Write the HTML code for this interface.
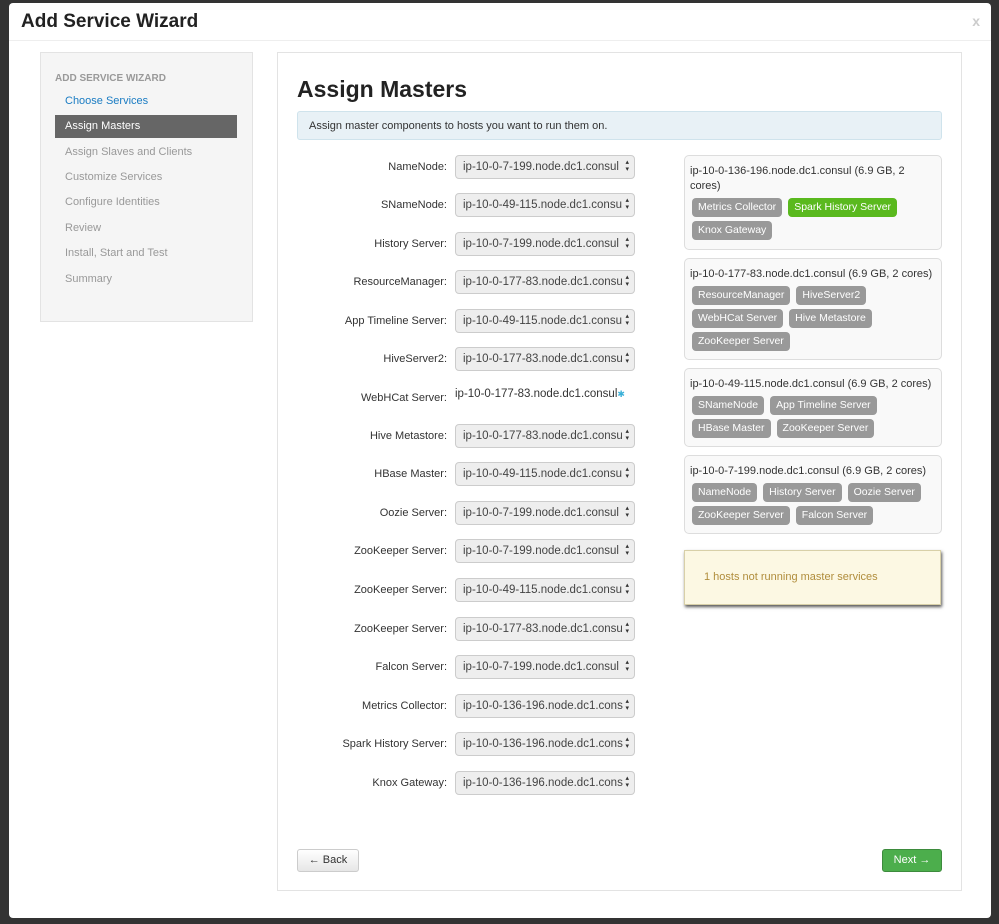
<!DOCTYPE html>
<html><head><style>
*{box-sizing:border-box;margin:0;padding:0}
body{width:999px;height:924px;background:#333;font-family:"Liberation Sans",sans-serif;font-size:12px;color:#333;position:relative;overflow:hidden}
.modal{position:absolute;left:9px;top:3px;width:982px;height:915px;background:#fff;border-radius:4px}
.hdr{position:absolute;left:0;top:0;width:100%;height:38px;border-bottom:1px solid #eee}
.hdr h3{position:absolute;left:12px;top:8px;font-size:19px;font-weight:bold;color:#222}
.close{position:absolute;right:11px;top:10px;font-size:14px;font-weight:bold;color:#ccc}
.side{position:absolute;left:31px;top:49px;width:213px;height:270px;background:#f5f5f5;border:1px solid #e3e3e3}
.side .t{position:absolute;left:14px;top:20px;font-size:10px;font-weight:bold;color:#999}
.side .i{position:absolute;left:14px;width:182px;height:23px;padding-left:10px;line-height:23px;font-size:11px;color:#999}
.main{position:absolute;left:268px;top:49px;width:685px;height:839px;border:1px solid #e3e3e3}
h2{position:absolute;left:19px;top:23px;font-size:23px;font-weight:bold;color:#222}
.info{position:absolute;left:19px;top:58px;width:645px;height:29px;background:#e8f1f6;border:1px solid #cfe3ec;border-radius:3px;padding:8px 11px;font-size:11px;color:#333}
.lbl{position:absolute;width:169px;text-align:right;font-size:11px;left:0}
.sel{position:absolute;left:177px;width:180px;height:24px;background:#eee;border:1px solid #ccc;border-radius:4px;font-size:11.5px;padding:5px 7px;color:#444;white-space:nowrap;overflow:hidden}
.sel:after{content:"▴\A▾";white-space:pre;position:absolute;right:5px;top:3px;font-size:7px;line-height:7px;color:#333}
.host{position:absolute;left:406px;width:258px;background:#f9f9f9;border:1px solid #ddd;border-radius:5px;padding:8px 4px 0 5px;font-size:11px;line-height:15px}
.b{display:inline-block;background:#999;color:#fff;border-radius:4px;padding:2px 6px;font-size:10.5px;margin:4px 4px 0 2px;line-height:15px}
.g{background:#5ab91e}
.warn{position:absolute;left:406px;top:497px;width:257px;height:55px;background:#fcf8e3;border:1px solid #d8d0a8;box-shadow:1px 2px 3px #555;padding:20px 19px;color:#b08d3c;font-size:11px}
.btn{position:absolute;top:796px;height:23px;border-radius:3px;font-size:11px;line-height:21px;text-align:center}
</style></head><body>
<div class="modal">
<div class="hdr"><h3>Add Service Wizard</h3><span class="close">x</span></div>
<div class="side">
<div class="t">ADD SERVICE WIZARD</div>
<div class="i" style="top:37px;color:#1a7cc3">Choose Services</div>
<div class="i" style="top:62px;background:#666;color:#fff">Assign Masters</div>
<div class="i" style="top:88px">Assign Slaves and Clients</div>
<div class="i" style="top:113px">Customize Services</div>
<div class="i" style="top:138px">Configure Identities</div>
<div class="i" style="top:164px">Review</div>
<div class="i" style="top:189px">Install, Start and Test</div>
<div class="i" style="top:215px">Summary</div>
</div>
<div class="main">
<h2>Assign Masters</h2>
<div class="info">Assign master components to hosts you want to run them on.</div>

<div class="lbl" style="top:108px">NameNode:</div><div class="sel" style="top:102px">ip-10-0-7-199.node.dc1.consul</div>
<div class="lbl" style="top:146px">SNameNode:</div><div class="sel" style="top:140px">ip-10-0-49-115.node.dc1.consu</div>
<div class="lbl" style="top:185px">History Server:</div><div class="sel" style="top:179px">ip-10-0-7-199.node.dc1.consul</div>
<div class="lbl" style="top:223px">ResourceManager:</div><div class="sel" style="top:217px">ip-10-0-177-83.node.dc1.consu</div>
<div class="lbl" style="top:262px">App Timeline Server:</div><div class="sel" style="top:256px">ip-10-0-49-115.node.dc1.consu</div>
<div class="lbl" style="top:300px">HiveServer2:</div><div class="sel" style="top:294px">ip-10-0-177-83.node.dc1.consu</div>
<div class="lbl" style="top:339px">WebHCat Server:</div><div style="position:absolute;left:177px;top:335px;font-size:11.5px">ip-10-0-177-83.node.dc1.consul<span style="color:#3ab0d8;font-size:9px">✱</span></div>
<div class="lbl" style="top:377px">Hive Metastore:</div><div class="sel" style="top:371px">ip-10-0-177-83.node.dc1.consu</div>
<div class="lbl" style="top:415px">HBase Master:</div><div class="sel" style="top:409px">ip-10-0-49-115.node.dc1.consu</div>
<div class="lbl" style="top:454px">Oozie Server:</div><div class="sel" style="top:448px">ip-10-0-7-199.node.dc1.consul</div>
<div class="lbl" style="top:492px">ZooKeeper Server:</div><div class="sel" style="top:486px">ip-10-0-7-199.node.dc1.consul</div>
<div class="lbl" style="top:531px">ZooKeeper Server:</div><div class="sel" style="top:525px">ip-10-0-49-115.node.dc1.consu</div>
<div class="lbl" style="top:570px">ZooKeeper Server:</div><div class="sel" style="top:564px">ip-10-0-177-83.node.dc1.consu</div>
<div class="lbl" style="top:608px">Falcon Server:</div><div class="sel" style="top:602px">ip-10-0-7-199.node.dc1.consul</div>
<div class="lbl" style="top:647px">Metrics Collector:</div><div class="sel" style="top:641px">ip-10-0-136-196.node.dc1.cons</div>
<div class="lbl" style="top:685px">Spark History Server:</div><div class="sel" style="top:679px">ip-10-0-136-196.node.dc1.cons</div>
<div class="lbl" style="top:724px">Knox Gateway:</div><div class="sel" style="top:718px">ip-10-0-136-196.node.dc1.cons</div>

<div class="host" style="top:102px;height:95px">ip-10-0-136-196.node.dc1.consul (6.9 GB, 2 cores)<br><span class="b">Metrics Collector</span><span class="b g">Spark History Server</span><span class="b">Knox Gateway</span></div>
<div class="host" style="top:205px;height:102px">ip-10-0-177-83.node.dc1.consul (6.9 GB, 2 cores)<br><span class="b">ResourceManager</span><span class="b">HiveServer2</span><span class="b">WebHCat Server</span><span class="b">Hive Metastore</span><span class="b">ZooKeeper Server</span></div>
<div class="host" style="top:315px;height:79px">ip-10-0-49-115.node.dc1.consul (6.9 GB, 2 cores)<br><span class="b">SNameNode</span><span class="b">App Timeline Server</span><span class="b">HBase Master</span><span class="b">ZooKeeper Server</span></div>
<div class="host" style="top:402px;height:79px">ip-10-0-7-199.node.dc1.consul (6.9 GB, 2 cores)<br><span class="b">NameNode</span><span class="b">History Server</span><span class="b">Oozie Server</span><span class="b">ZooKeeper Server</span><span class="b">Falcon Server</span></div>
<div class="warn">1 hosts not running master services</div>

<div class="btn" style="left:19px;width:62px;background:linear-gradient(#fff,#e6e6e6);border:1px solid #ccc;color:#333">← Back</div>
<div class="btn" style="left:604px;width:60px;background:#4cae4c;border:1px solid #3d8b3d;color:#fff">Next →</div>
</div>
</div>
</body></html>
